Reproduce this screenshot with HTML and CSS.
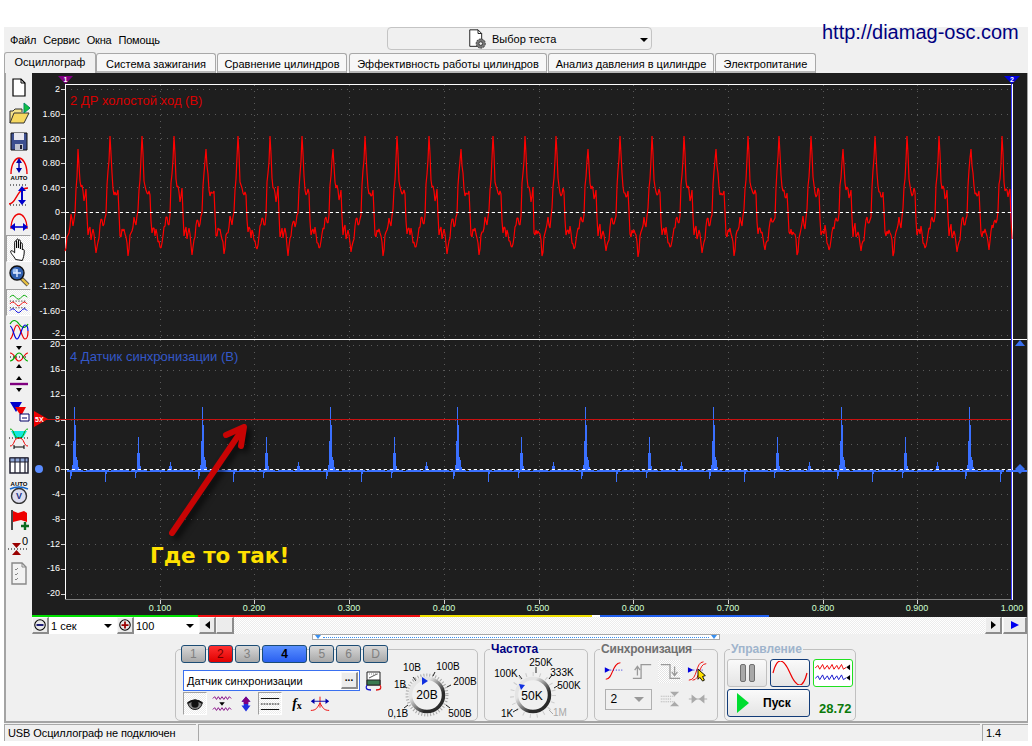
FILE: index.html
```html
<!DOCTYPE html>
<html lang="ru">
<head>
    <meta charset="UTF-8">
    <title>USB Осциллограф</title>
    <link rel="stylesheet" href="styles.css">
</head>
<body>
    <div class="window">
        <div class="topbar">
            <nav class="menu">
                <span>Файл</span>
                <span>Сервис</span>
                <span>Окна</span>
                <span>Помощь</span>
            </nav>
            <div class="test-select">
                <svg class="test-icon" viewBox="0 0 24 24">
                    <path d="M3 2h9l4 4v14H3z" fill="#fff" stroke="#111"/>
                    <path d="M12 2v4h4" fill="none" stroke="#111"/>
                    <circle cx="15" cy="17" r="5" fill="#777" stroke="#333" stroke-dasharray="2 1"/>
                    <circle cx="15" cy="17" r="2" fill="#eee" stroke="#333"/>
                </svg>
                <span>Выбор теста</span>
                <i class="caret"></i>
            </div>
            <a class="site-link">http://diamag-osc.com</a>
        </div>

        <div class="tabs">
            <span class="tab active">Осциллограф</span>
            <span class="tab w-ign">Система зажигания</span>
            <span class="tab w-cmp">Сравнение цилиндров</span>
            <span class="tab w-eff">Эффективность работы цилиндров</span>
            <span class="tab w-prs">Анализ давления в цилиндре</span>
            <span class="tab w-pwr">Электропитание</span>
        </div>

        <div class="frame">
            <div class="workspace">
                <aside class="sidebar">
                    <div class="side-btn"><svg viewBox="0 0 24 24"><path d="M6 4h8l4 4v13H6z" fill="#fff" stroke="#000" stroke-width="1.2"/><path d="M14 4v4h4" fill="none" stroke="#000"/></svg></div>
                    <div class="side-btn"><svg viewBox="0 0 24 24"><path d="M3 21V9h3l2-2h7v3" fill="#f3e28a" stroke="#333"/><path d="M3 21l4-10h15l-5 10z" fill="#f5d860" stroke="#333"/><path d="M17 1l6 5-6 5z" fill="#10c040" stroke="#086"/></svg></div>
                    <div class="side-btn"><svg viewBox="0 0 24 24"><path d="M4 4h16v17H4z" fill="#3c4f90" stroke="#111"/><path d="M7 4h10v7H7z" fill="#e8e8f0"/><path d="M8 15h8v6H8z" fill="#c0c4d0"/><path d="M13 16h2v4h-2z" fill="#223"/></svg></div>
                    <div class="side-btn"><svg viewBox="0 0 24 24"><path d="M4 18C4 7 9 2 12 2s8 5 8 16" fill="none" stroke="#e00" stroke-width="1.4"/><path d="M12 5v9" stroke="#00a" stroke-width="1.4"/><path d="M9 7l3-5 3 5zM9 12l3 5 3-5z" fill="#00a"/><text x="12" y="24" class="icon-text" text-anchor="middle">AUTO</text></svg></div>
                    <div class="side-btn"><svg viewBox="0 0 24 24"><path d="M2 21C10 21 9 5 21 5" fill="none" stroke="#e00" stroke-width="1.4"/><path d="M3 2h18M3 22h18" stroke="#000" stroke-dasharray="1 2"/><path d="M15 6v12" stroke="#00c" stroke-width="2"/><path d="M11 8l4-5 4 5zM11 17l4 5 4-5z" fill="#00c"/></svg></div>
                    <div class="side-btn"><svg viewBox="0 0 24 24"><path d="M4 19C4 8 9 4 12 4s8 4 8 15" fill="none" stroke="#e00" stroke-width="1.3"/><path d="M6 17h12" stroke="#00c" stroke-width="1.6"/><path d="M8 13l-5 4 5 4zM16 13l5 4-5 4z" fill="#00c"/></svg></div>
                    <div class="side-btn pressed"><svg viewBox="0 0 24 24"><path d="M9 23C7 19 3 16 4 14c1-1 3 1 4 2V5c0-2 2-2 2 0v6-8c0-2 2-2 2 0v8-7c0-2 2-2 2 0v8-5c0-2 2-2 2 0v6c0-1 2-1 2 1 0 5-1 7-2 10z" fill="#fff" stroke="#000"/></svg></div>
                    <div class="side-btn"><svg viewBox="0 0 24 24"><path d="M14 14l7 7" stroke="#555" stroke-width="4"/><path d="M15 15l6 6" stroke="#e8c040" stroke-width="2.4"/><circle cx="10" cy="9" r="7" fill="#3060b0" stroke="#111" stroke-width="1.4"/><circle cx="8" cy="7" r="2.5" fill="#a0c0f0"/><path d="M6 9h8M10 5v8" stroke="#dce8ff" stroke-width="1.4"/></svg></div>
                    <div class="side-btn pressed"><svg viewBox="0 0 24 24"><path d="M3 6q3-4 6 0t6 0 6 0" fill="none" stroke="#0a0"/><path d="M3 13q3-4 6 0t6 0 6 0" fill="none" stroke="#e00"/><path d="M3 20q3-4 6 0t6 0 6 0" fill="none" stroke="#00d"/><path d="M3 10h18M3 17h18" stroke="#000" stroke-dasharray="1 2"/></svg></div>
                    <div class="side-btn"><svg viewBox="0 0 24 24"><path d="M3 6q4-7 9 0t9 0" fill="none" stroke="#0a0" stroke-width="1.2"/><path d="M3 21C6 21 7 7 10 7s5 14 8 14 3-8 3-8" fill="none" stroke="#e00" stroke-width="1.2"/><path d="M3 8c3 0 4 13 7 13s5-14 8-14 3 6 3 6" fill="none" stroke="#00d" stroke-width="1.2"/></svg></div>
                    <div class="side-btn"><svg viewBox="0 0 24 24"><path d="M3 8c5 0 5 8 9 8s5-8 9-8" fill="none" stroke="#e00" stroke-width="1.2"/><path d="M3 16c5 0 5-8 9-8s5 8 9 8" fill="none" stroke="#0a0" stroke-width="1.2"/><path d="M3 12h18" stroke="#000" stroke-dasharray="1 2"/><path d="M9 1h6l-3 4zM9 23h6l-3-4z" fill="#000"/></svg></div>
                    <div class="side-btn"><svg viewBox="0 0 24 24"><path d="M3 12h18" stroke="#800080" stroke-width="2.4"/><path d="M9 8h6l-3-4zM9 16h6l-3 4z" fill="#000"/></svg></div>
                    <div class="side-btn"><svg viewBox="0 0 24 24"><path d="M3 3h12l-6 10z" fill="#00c"/><path d="M8 8h11l-5 9z" fill="#e00"/><path d="M13 15h9v7h-9z" fill="#fff" stroke="#006"/><path d="M15 19h5" stroke="#006"/></svg></div>
                    <div class="side-btn"><svg viewBox="0 0 24 24"><path d="M4 5h16l-4 7H8z" fill="#10e8e0"/><path d="M3 3c5 0 3 9 9 9s4-9 9-9" fill="none" stroke="#0a0"/><path d="M2 12h20" stroke="#000" stroke-dasharray="1 2"/><path d="M3 20c5 0 3-8 9-8s4 8 9 8" fill="none" stroke="#e00"/><path d="M7 21h10M7 19v4M17 19v4" stroke="#000"/></svg></div>
                    <div class="side-btn"><svg viewBox="0 0 24 24"><path d="M3 5h18v15H3z" fill="#fff" stroke="#223" stroke-width="1.5"/><path d="M3 5h18v4H3z" fill="#90a8d8" stroke="#223"/><path d="M8 5v15M13 5v15M18 5v15" stroke="#223" stroke-width="1.2"/></svg></div>
                    <div class="side-btn"><svg viewBox="0 0 24 24"><text x="12" y="6" class="icon-text" text-anchor="middle">AUTO</text><path d="M3 9q9-4 18 0" fill="none" stroke="#16c" stroke-width="1.4"/><circle cx="12" cy="16" r="7.5" fill="#dde" stroke="#333" stroke-width="1.4"/><text x="12" y="19" class="icon-v" text-anchor="middle">V</text></svg></div>
                    <div class="side-btn"><svg viewBox="0 0 24 24"><path d="M5 3v20" stroke="#000" stroke-width="1.4"/><path d="M6 4l5 2 6-2 3 2v9l-6-2-8 2z" fill="#e00"/><path d="M14 19h8M18 15v8" stroke="#0a6a20" stroke-width="2.4"/></svg></div>
                    <div class="side-btn"><svg viewBox="0 0 24 24"><path d="M5 9h9l-4.500 5zM5 21h9l-4.500-5z" fill="#900"/><path d="M1 15h20" stroke="#000" stroke-dasharray="1 2"/><text x="18" y="11" class="icon-num" text-anchor="middle">0</text></svg></div>
                    <div class="side-btn"><svg viewBox="0 0 24 24"><path d="M5 2h10l4 4v17H5z" fill="#f2f2f2" stroke="#888" stroke-width="1.4"/><path d="M15 2v4h4" fill="none" stroke="#888"/><path d="M8 8l1 1 2-2M8 13l1 1 2-2M8 18l1 1 2-2" fill="none" stroke="#888"/></svg></div>
                </aside>

                <div class="scope-col">
                    <svg class="scope" viewBox="32 73 995 542">
                        <g id="grid"></g>

                        <text x="70" y="105" class="trace-title ch2-title">2 ДР холостой ход (В)</text>
                        <text x="70" y="361" class="trace-title ch4-title">4 Датчик синхронизации (В)</text>

                        <g class="axis-labels">
                            <text x="60" y="92">2</text>
                            <text x="60" y="117">1.60</text>
                            <text x="60" y="142">1.20</text>
                            <text x="60" y="166">0.80</text>
                            <text x="60" y="191">0.40</text>
                            <text x="60" y="215">0</text>
                            <text x="60" y="240">-0.40</text>
                            <text x="60" y="265">-0.80</text>
                            <text x="60" y="289">-1.20</text>
                            <text x="60" y="314">-1.60</text>
                            <text x="60" y="336">-2</text>
                            <text x="60" y="347">20</text>
                            <text x="60" y="372">16</text>
                            <text x="60" y="397">12</text>
                            <text x="60" y="422">8</text>
                            <text x="60" y="447">4</text>
                            <text x="60" y="472">0</text>
                            <text x="60" y="497">-4</text>
                            <text x="60" y="522">-8</text>
                            <text x="60" y="547">-12</text>
                            <text x="60" y="571">-16</text>
                            <text x="60" y="596">-20</text>
                        </g>
                        <g class="time-labels">
                            <text x="160" y="611">0.100</text>
                            <text x="254" y="611">0.200</text>
                            <text x="349" y="611">0.300</text>
                            <text x="444" y="611">0.400</text>
                            <text x="538" y="611">0.500</text>
                            <text x="633" y="611">0.600</text>
                            <text x="728" y="611">0.700</text>
                            <text x="823" y="611">0.800</text>
                            <text x="917" y="611">0.900</text>
                            <text x="1012" y="611">1.000</text>
                        </g>

                        <polyline id="ch2" class="trace trace-red"></polyline>
                        <path id="ch4-base" class="trace-base"></path>
                        <polyline id="ch4" class="trace trace-blue"></polyline>
                        <path d="M66 212H1011M66 469H1011" class="zero-line"/>
                        <path d="M46 419H1011" class="trig-line"/>

                        <path d="M58 76h15l-7.500 8z" fill="#800080"/>
                        <text x="65.500" y="82" class="marker-num">1</text>
                        <path d="M1004 76h16l-8 8z" fill="#0000e0"/>
                        <text x="1012" y="82" class="marker-num">2</text>
                        <path d="M34 411l14 8-14 8z" fill="#ee0000"/>
                        <text x="35" y="422" class="marker-5x">5X</text>
                        <circle cx="39" cy="469" r="4" fill="#5a8cff"/>
                        <path d="M1020 340l5 6h-10z" fill="#3a70f0"/>
                        <path d="M1020 464l5 5-5 5-5-5z" fill="#3a70f0"/>

                        <g class="arrow">
                            <path d="M172 533L242 430" class="arrow-line"/>
                            <path d="M226 435L244 427L241 446" class="arrow-line"/>
                        </g>
                        <text x="150" y="563" class="note">Где то так!</text>
                    </svg>

                    <div class="color-bar">
                        <i class="seg-green"></i><i class="seg-red"></i><i class="seg-yellow"></i><i class="seg-gap"></i><i class="seg-blue"></i><i class="seg-dark"></i>
                    </div>

                    <div class="time-bar">
                        <div class="bevel round-btn"><svg viewBox="0 0 16 16"><circle cx="8" cy="8" r="6" fill="#e8e8e8" stroke="#000" stroke-width="1.2"/><path d="M4 8h8" stroke="#006" stroke-width="2"/></svg></div>
                        <div class="combo combo-time"><span>1 сек</span><i class="caret"></i></div>
                        <div class="bevel round-btn"><svg viewBox="0 0 16 16"><circle cx="8" cy="8" r="6" fill="#e8e8e8" stroke="#000" stroke-width="1.2"/><path d="M4 8h8M8 4v8" stroke="#900" stroke-width="2"/></svg></div>
                        <div class="combo combo-count"><span>100</span><i class="caret"></i></div>
                        <div class="bevel scroll-btn"><i class="tri-left"></i></div>
                        <div class="bevel scroll-thumb"></div>
                        <div class="scroll-track"></div>
                        <div class="bevel scroll-btn"><i class="tri-right"></i></div>
                        <div class="bevel play-btn"><i class="tri-blue"></i></div>
                    </div>
                </div>
            </div>

            <div class="collapse-row">
                <div class="collapse-handle"><i class="tri-down"></i><span class="dots"></span><i class="tri-down"></i></div>
            </div>

            <div class="panel">
                <section class="group group-channel">
                    <div class="channel-col">
                        <div class="channels">
                            <button class="ch">1</button>
                            <button class="ch ch-red">2</button>
                            <button class="ch">3</button>
                            <button class="ch ch-blue">4</button>
                            <button class="ch">5</button>
                            <button class="ch">6</button>
                            <button class="ch">D</button>
                        </div>
                        <div class="sensor-row">
                            <div class="sensor-input">
                                <span>Датчик синхронизации</span>
                                <b class="bevel more-btn">...</b>
                            </div>
                            <svg class="meter-icon" viewBox="0 0 20 20">
                                <path d="M4 1h13v13H4z" fill="#fff" stroke="#222"/>
                                <path d="M6 7l8-4" stroke="#555"/>
                                <path d="M6 3h9" stroke="#888" stroke-dasharray="1 1"/>
                                <path d="M4 9h13v5H4z" fill="#3a7a50" stroke="#222"/>
                                <path d="M4 14q-3 5 4 5" fill="none" stroke="#11c" stroke-width="1.3"/>
                                <path d="M17 14q3 5-4 5" fill="none" stroke="#d11" stroke-width="1.3"/>
                            </svg>
                        </div>
                        <div class="tools">
                            <div class="tool pressed"><svg viewBox="0 0 24 22"><path d="M4 10q8-7 16 0-2 7-8 7t-8-7z" fill="#888" stroke="#111"/><circle cx="12" cy="11" r="4" fill="#111"/><path d="M4 10q8-6 16 0" fill="none" stroke="#111" stroke-width="2"/></svg></div>
                            <div class="tool"><svg viewBox="0 0 24 22"><path d="M2 5l2-2 2 3 2-3 2 3 2-3 2 3 2-3 2 3 2-3 2 2" fill="none" stroke="#800080"/><path d="M9 9h6l-3 4z" fill="#000"/><path d="M2 17l2-2 2 3 2-3 2 3 2-3 2 3 2-3 2 3 2-3 2 2" fill="none" stroke="#800080"/></svg></div>
                            <div class="tool tool-narrow"><svg viewBox="0 0 24 22"><path d="M12 1l6 7h-3v5h3l-6 8-6-8h3V8H6z" fill="#2030e0"/><path d="M12 1l6 7h-3v3H9V8H6z" fill="#800080"/></svg></div>
                            <div class="tool pressed"><svg viewBox="0 0 24 22"><path d="M2 5h20M2 17h20" stroke="#000"/><path d="M2 11h20" stroke="#000" stroke-dasharray="2 1"/></svg></div>
                            <div class="tool tool-fx"><i>f</i><small>x</small></div>
                            <div class="tool tool-split"><svg viewBox="0 0 24 22"><path d="M12 3v12M2 18c6 0 7-3 10-8 3 5 4 8 10 8" fill="none" stroke="#e00"/><path d="M3 8h18" stroke="#00a"/><path d="M2 8l4-3v6zM22 8l-4-3v6z" fill="#00a"/></svg></div>
                        </div>
                    </div>
                    <svg class="knob knob-volt" viewBox="388 650 89 70">
                        <defs>
                            <linearGradient id="ring" x1="0" y1="0" x2="1" y2="1">
                                <stop offset="0.300" stop-color="#e4e4e4"/>
                                <stop offset="0.700" stop-color="#2a2a2a"/>
                            </linearGradient>
                        </defs>
                        <circle cx="427" cy="695" r="20" class="knob-scale"/>
                        <path d="M416 681l-3-4M433 676l2-4M447 687l4-2M446 705l4 3M408 705l-4 3M407 688l-4-2" class="knob-tick"/>
                        <circle cx="427" cy="695" r="16.500" class="knob-ring"/>
                        <path d="M422 677l6 4-6 4z" fill="#1030e0"/>
                        <text x="427" y="699" class="knob-value">20В</text>
                        <text x="412" y="671">10В</text>
                        <text x="448" y="670">100В</text>
                        <text x="400" y="688">1В</text>
                        <text x="465" y="685">200В</text>
                        <text x="398" y="717">0,1В</text>
                        <text x="460" y="717">500В</text>
                    </svg>
                </section>

                <section class="group group-freq">
                    <h3 class="group-title title-navy">Частота</h3>
                    <svg class="knob knob-freq" viewBox="485 656 102 64">
                        <circle cx="533" cy="695" r="21" class="knob-scale knob-scale-soft"/>
                        <path d="M522 679l-3-4M536 673v-6M549 679l3-4M554 688l5-3M518 709l-5 3" class="knob-tick"/>
                        <path d="M549 710l4 4" class="knob-tick-off"/>
                        <circle cx="533" cy="695" r="16.500" class="knob-ring"/>
                        <path d="M519 684l6 1-4 5z" fill="#1030e0"/>
                        <text x="532" y="700" class="knob-value">50K</text>
                        <text x="506" y="677">100K</text>
                        <text x="541" y="666">250K</text>
                        <text x="562" y="676">333K</text>
                        <text x="569" y="689">500K</text>
                        <text x="507" y="717">1K</text>
                        <text x="560" y="716" class="label-off">1M</text>
                    </svg>
                </section>

                <section class="group group-sync">
                    <h3 class="group-title title-grey">Синхронизация</h3>
                    <div class="sync-grid">
                        <div class="tool"><svg viewBox="0 0 24 24"><path d="M3 21C11 21 10 3 19 3" fill="none" stroke="#e00" stroke-width="1.2"/><path d="M2 8l6 3-6 3z" fill="#00d"/><path d="M8 11h13" stroke="#00d" stroke-dasharray="1 2"/></svg></div>
                        <div class="tool"><svg viewBox="0 0 24 24"><path d="M2 20h9V5h11" fill="none" stroke="#999" stroke-width="1.4"/><path d="M7 17V8M4 11l3-4 3 4" fill="none" stroke="#999" stroke-width="1.4"/></svg></div>
                        <div class="tool dither"><svg viewBox="0 0 24 24"><path d="M2 5h10v15h11" fill="none" stroke="#999" stroke-width="1.4"/><path d="M17 7v9M14 13l3 4 3-4" fill="none" stroke="#999" stroke-width="1.4"/></svg></div>
                        <div class="tool"><svg viewBox="0 0 24 24"><path d="M2 22C12 22 9 2 18 2M6 22C15 22 12 4 21 4" fill="none" stroke="#e00"/><path d="M1 8l6 3-6 3z" fill="#00d"/><path d="M7 11h11" stroke="#00d" stroke-dasharray="1 2"/><path d="M12 10l8 7-3 1 2 4-2 1-3-4-2 2z" fill="#ffe000" stroke="#000"/></svg></div>
                        <div class="mini-combo"><span>2</span><i class="caret caret-off"></i></div>
                        <div class="tool"><svg viewBox="0 0 24 24"><path d="M2 9h15M2 12h12M2 15h15" stroke="#aaa" stroke-dasharray="1 1"/><path d="M12 4h10l-5 5zM12 20h10l-5-5z" fill="#aaa"/></svg></div>
                        <div class="tool"><svg viewBox="0 0 24 24"><path d="M2 12h20" stroke="#aaa"/><path d="M5 7l6 5-6 5zM19 7l-6 5 6 5z" fill="#aaa"/></svg></div>
                    </div>
                </section>

                <section class="group group-run">
                    <h3 class="group-title title-blue">Управление</h3>
                    <div class="run-grid">
                        <button class="run-btn btn-pause"><i></i><i></i></button>
                        <button class="run-btn btn-sine"><svg viewBox="0 0 36 24"><path d="M1 12C5 -4 11 -4 18 12S31 28 35 12" fill="none" stroke="#e00" stroke-width="1.2"/></svg></button>
                        <button class="run-btn btn-waves"><svg viewBox="0 0 38 24"><path d="M0 7l3-3 2 4 3-5 2 5 3-4 2 4 3-5 2 5 3-4 2 4 3-5 2 5 3-2" fill="none" stroke="#e00"/><path d="M0 18l3-3 2 4 3-5 2 5 3-4 2 4 3-5 2 5 3-4 2 4 3-5 2 5 3-2" fill="none" stroke="#11c"/><path d="M37 3l-4 3 4 3zM37 14l-4 3 4 3z" fill="#000"/></svg></button>
                        <button class="run-btn btn-start"><i class="tri-green"></i><b>Пуск</b></button>
                        <span class="fps">28.72</span>
                    </div>
                </section>
            </div>
        </div>

        <footer class="statusbar">
            <span class="status-cell status-main">USB Осциллограф не подключен</span>
            <span class="status-cell status-fill"></span>
            <span class="status-cell status-ver">1.4</span>
        </footer>
    </div>

    <script src="app.js"></script>
</body>
</html>
```

FILE: styles.css
```css
* {
    box-sizing: border-box;
}

body {
    margin: 0;
    background-color: #ffffff;
    font-family: "Liberation Sans", Arial, sans-serif;
    font-size: 11px;
    color: #000000;
    overflow: hidden;
}

.window {
    width: 1024px;
    height: 714px;
    margin: 27px 0 0 4px;
    background-color: #f0f0f0;
    display: flex;
    flex-direction: column;
}

/* menu line */
.topbar {
    height: 25px;
    display: flex;
    align-items: flex-start;
    flex-shrink: 0;
}

.menu {
    width: 383px;
    padding: 7px 0 0 6px;
    display: flex;
    gap: 7px;
    font-size: 11px;
    letter-spacing: -0.2px;
}

.test-select {
    width: 265px;
    height: 23px;
    display: flex;
    align-items: center;
    padding-left: 79px;
    border: 1px solid #c4c4c4;
    border-radius: 4px;
    position: relative;
}

.test-icon {
    width: 22px;
    height: 22px;
    margin-right: 3px;
}

.test-select .caret {
    position: absolute;
    right: 3px;
    top: 10px;
}

.site-link {
    margin: -6px 0 0 170px;
    font-size: 20px;
    color: #000080;
    white-space: nowrap;
}

.caret {
    display: inline-block;
    width: 0;
    height: 0;
    border-left: 4px solid transparent;
    border-right: 4px solid transparent;
    border-top: 4px solid #000000;
}

.caret-off {
    border-left-width: 5px;
    border-right-width: 5px;
    border-top: 5px solid #999999;
}

/* tabs */
.tabs {
    height: 21px;
    display: flex;
    align-items: flex-end;
    flex-shrink: 0;
}

.tab {
    height: 20px;
    margin-right: 1px;
    border: 1px solid #a8a8a8;
    border-bottom: none;
    border-radius: 3px 3px 0 0;
    background-color: #f7f7f7;
    box-shadow: inset 0 -2px 0 #b8b8b8;
    display: flex;
    align-items: center;
    justify-content: center;
    white-space: nowrap;
}

.tab.active {
    height: 21px;
    width: 92px;
    margin-right: 0;
    background-color: #f0f0f0;
    box-shadow: none;
    padding-bottom: 3px;
}

.w-ign { width: 120px; }
.w-cmp { width: 130px; margin-right: 2px; }
.w-eff { width: 198px; }
.w-prs { width: 166px; }
.w-pwr { width: 101px; }

/* main area */
.frame {
    height: 650px;
    border-left: 2px solid #a4a4a4;
    border-right: 1px solid #a4a4a4;
    border-bottom: 2px solid #a4a4a4;
    flex-shrink: 0;
}

.workspace {
    display: flex;
    height: 561px;
}

.sidebar {
    width: 26px;
    flex-shrink: 0;
    display: flex;
    flex-direction: column;
}

.side-btn {
    width: 25px;
    height: 27px;
    display: flex;
    align-items: center;
    justify-content: center;
}

.side-btn svg {
    width: 24px;
    height: 24px;
}

.pressed {
    border-top: 1px solid #a0a0a0;
    border-left: 1px solid #a0a0a0;
    border-right: 1px solid #ffffff;
    border-bottom: 1px solid #ffffff;
    background: repeating-conic-gradient(#ffffff 0 25%, #ececec 0 50%) 0 0 / 2px 2px;
}

.icon-text {
    font-size: 6px;
    font-weight: bold;
    font-family: "Liberation Sans", Arial, sans-serif;
}

.icon-v {
    font-size: 9px;
    font-weight: bold;
    fill: #223388;
    font-family: "Liberation Sans", Arial, sans-serif;
}

.icon-num {
    font-size: 11px;
    font-family: "Liberation Sans", Arial, sans-serif;
}

.scope-col {
    width: 995px;
    flex-shrink: 0;
}

/* the scope picture */
.scope {
    display: block;
    width: 995px;
    height: 542px;
    background-color: #1e1e1e;
    font-family: "Liberation Sans", Arial, sans-serif;
}

.grid-dots {
    stroke: #5a5a5a;
    stroke-dasharray: 1 5;
    shape-rendering: crispEdges;
}

.axis-line {
    stroke: #ffffff;
    shape-rendering: crispEdges;
}

.axis-line-blue {
    stroke: #3a3aff;
    shape-rendering: crispEdges;
}

.axis-tick {
    stroke: #d0d0d0;
    shape-rendering: crispEdges;
}

.axis-bottom {
    stroke: #808080;
    shape-rendering: crispEdges;
}

.axis-labels text {
    font-size: 9px;
    fill: #ffffff;
    text-anchor: end;
}

.time-labels text {
    font-size: 9px;
    fill: #d0ffd0;
    text-anchor: middle;
}

.trace-title {
    font-size: 13px;
}

.ch2-title {
    fill: #d80000;
}

.ch4-title {
    fill: #3458c8;
}

.trace {
    fill: none;
    stroke-width: 1;
}

.trace-red {
    stroke: #ff0000;
    stroke-width: 1.2;
    stroke-linejoin: bevel;
}

.trace-blue {
    stroke: #3a70ff;
    shape-rendering: crispEdges;
}

.trace-base {
    fill: none;
    stroke: #3a70ff;
    stroke-width: 2;
    shape-rendering: crispEdges;
}

.zero-line {
    stroke: #ffffff;
    stroke-dasharray: 3 3;
    shape-rendering: crispEdges;
}

.trig-line {
    stroke: #c81010;
    shape-rendering: crispEdges;
}

.marker-num {
    font-size: 7px;
    font-weight: bold;
    fill: #ffffff;
    text-anchor: middle;
}

.marker-5x {
    font-size: 7px;
    font-weight: bold;
    fill: #ffffff;
}

.arrow {
    filter: drop-shadow(4px 4px 3px rgba(0, 0, 0, 0.7));
}

.arrow-line {
    fill: none;
    stroke: #c80404;
    stroke-width: 6;
    stroke-linecap: round;
    stroke-linejoin: round;
}

.note {
    font-family: "DejaVu Sans", sans-serif;
    font-size: 21.500px;
    font-weight: bold;
    fill: #ffe000;
}

/* coloured strip under the scope */
.color-bar {
    height: 2px;
    display: flex;
}

.color-bar i {
    display: block;
    height: 2px;
}

.seg-green { width: 166px; background-color: #00e000; }
.seg-red { width: 222px; background-color: #f01010; }
.seg-yellow { width: 172px; background-color: #f0e000; }
.seg-gap { width: 8px; background-color: #ffffff; }
.seg-blue { width: 169px; background-color: #2060f0; }
.seg-dark { flex: 1; background-color: #202020; }

.time-bar {
    height: 17px;
    display: flex;
    background-color: #ffffff;
}

.bevel {
    background-color: #ececec;
    border-top: 1px solid #f8f8f8;
    border-left: 1px solid #f8f8f8;
    border-right: 2px solid #8c8c8c;
    border-bottom: 2px solid #8c8c8c;
}

.round-btn {
    width: 17px;
    display: flex;
    align-items: center;
    justify-content: center;
}

.round-btn svg {
    width: 14px;
    height: 14px;
}

.combo {
    display: flex;
    align-items: center;
    justify-content: space-between;
    padding: 0 5px 0 2px;
    font-size: 11px;
}

.combo-time { width: 68px; }
.combo-count { width: 65px; }

.scroll-btn {
    width: 17px;
    display: flex;
    align-items: center;
    justify-content: center;
}

.scroll-thumb {
    width: 18px;
}

.scroll-track {
    flex: 1;
    background: repeating-conic-gradient(#ffffff 0 25%, #ececec 0 50%) 0 0 / 2px 2px;
}

.play-btn {
    width: 24px;
    margin-left: 1px;
    display: flex;
    align-items: center;
    justify-content: center;
}

.tri-left {
    border-top: 4px solid transparent;
    border-bottom: 4px solid transparent;
    border-right: 5px solid #000000;
}

.tri-right {
    border-top: 4px solid transparent;
    border-bottom: 4px solid transparent;
    border-left: 5px solid #000000;
}

.tri-blue {
    border-top: 4px solid transparent;
    border-bottom: 4px solid transparent;
    border-left: 8px solid #0000f0;
}

/* thin collapse handle */
.collapse-row {
    height: 6px;
    padding-left: 306px;
}

.collapse-handle {
    width: 408px;
    height: 6px;
    border: 1px solid #a8a8a8;
    background-color: #ffffff;
    display: flex;
    align-items: center;
    justify-content: space-between;
    padding: 0 2px;
}

.tri-down {
    border-left: 3px solid transparent;
    border-right: 3px solid transparent;
    border-top: 4px solid #3a90f0;
}

.dots {
    flex: 1;
    height: 1px;
    margin: 0 2px;
    border-top: 1px dotted #3a90f0;
}

/* bottom panel */
.panel {
    margin-top: 9px;
    padding-left: 169px;
    display: flex;
    gap: 6px;
}

.group {
    height: 72px;
    border: 1px solid #c0c0c0;
    border-radius: 5px;
    flex-shrink: 0;
}

.group-channel {
    width: 303px;
    display: flex;
}

.group-freq { width: 104px; }
.group-sync { width: 124px; }
.group-run { width: 132px; }

.group-title {
    display: table;
    height: 14px;
    margin: -8px 0 0 5px;
    padding: 0 1px;
    background-color: #f0f0f0;
    font-size: 12px;
    font-weight: bold;
    line-height: 14px;
}

.title-navy { color: #000080; }
.title-grey { color: #707070; letter-spacing: -0.2px; }
.title-blue { color: #9fb4cc; }

.channel-col {
    width: 212px;
    flex-shrink: 0;
}

.channels {
    display: flex;
    gap: 2px;
    margin: -5px 0 0 5px;
}

.ch {
    width: 25px;
    height: 18px;
    padding: 0;
    border: 1px solid #1c4c74;
    border-radius: 3px;
    background: linear-gradient(#d8d8d8, #a8a8a8);
    color: #808080;
    font-family: "Liberation Sans", Arial, sans-serif;
    font-size: 12px;
    line-height: 14px;
}

.ch-red {
    background: linear-gradient(#ff3030, #e00000);
    color: #700000;
}

.ch-blue {
    width: 46px;
    background: linear-gradient(#5a90ff, #2a60f0);
    color: #000000;
    font-weight: bold;
}

.sensor-row {
    display: flex;
    align-items: center;
    margin: 7px 0 0 7px;
    gap: 3px;
}

.sensor-input {
    width: 177px;
    height: 21px;
    border: 1px solid #3a70f0;
    background-color: #ffffff;
    display: flex;
    align-items: center;
    justify-content: space-between;
    padding: 0 1px 0 3px;
    font-size: 11px;
}

.more-btn {
    width: 17px;
    height: 17px;
    text-align: center;
    font-size: 10px;
    line-height: 9px;
}

.meter-icon {
    width: 20px;
    height: 20px;
}

.tools {
    display: flex;
    align-items: center;
    margin: 1px 0 0 7px;
    gap: 3px;
}

.tool {
    width: 24px;
    height: 23px;
    display: flex;
    align-items: center;
    justify-content: center;
}

.tool svg {
    width: 22px;
    height: 22px;
}

.tool-narrow {
    width: 18px;
}

.tool-narrow svg {
    width: 18px;
}

.tool-split {
    margin-left: -4px;
}

.tool-fx {
    font-family: "Liberation Serif", serif;
    font-weight: bold;
    font-size: 14px;
}

.tool-fx small {
    font-size: 10px;
    margin-top: 3px;
}

.dither {
    background: repeating-conic-gradient(#ffffff 0 25%, #e4e4e4 0 50%) 0 0 / 2px 2px;
}

.knob {
    display: block;
    font-family: "Liberation Sans", Arial, sans-serif;
}

.knob text {
    font-size: 10px;
    text-anchor: middle;
}

.knob .knob-value {
    font-size: 12px;
}

.knob .label-off {
    fill: #a8a8a8;
}

.knob-volt {
    width: 89px;
    height: 70px;
}

.knob-freq {
    width: 102px;
    height: 64px;
}

.knob-scale {
    fill: none;
    stroke: #a8a8a8;
    stroke-width: 3;
    stroke-dasharray: 1 2;
}

.knob-scale-soft {
    stroke: #cccccc;
    stroke-dasharray: 1 6;
    stroke-width: 4;
}

.knob-tick {
    fill: none;
    stroke: #222222;
}

.knob-tick-off {
    stroke: #aaaaaa;
}

.knob-ring {
    fill: #f0f0f0;
    stroke: url(#ring);
    stroke-width: 3.500;
}

.sync-grid {
    display: grid;
    grid-template-columns: repeat(4, 28px);
    grid-auto-rows: 24px;
    gap: 4px 0;
    align-items: center;
    justify-items: center;
    padding: 3px 0 0 5px;
}

.mini-combo {
    grid-column: span 2;
    width: 47px;
    height: 21px;
    border: 1px solid #b0b0b0;
    background-color: #f0f0f0;
    display: flex;
    align-items: center;
    justify-content: space-between;
    padding: 0 7px 0 5px;
    font-size: 12px;
}

.run-grid {
    display: grid;
    grid-template-columns: repeat(3, 40px);
    grid-auto-rows: 28px;
    gap: 2px 3px;
    padding: 3px 0 0 2px;
}

.run-btn {
    padding: 0;
    border-radius: 3px;
    background: linear-gradient(#fafafa, #e4e4e4);
    display: flex;
    align-items: center;
    justify-content: center;
}

.btn-pause {
    border: 1px solid #c0c0c0;
    gap: 3px;
}

.btn-pause i {
    width: 6px;
    height: 18px;
    border: 1px solid #707070;
    border-radius: 2px;
    background-color: #a8a8a8;
}

.btn-sine {
    border: 1px solid #123c78;
}

.btn-waves {
    border: 1px solid #20e020;
    background: #ffffff;
}

.run-btn svg {
    width: 36px;
    height: 24px;
}

.btn-start {
    grid-column: span 2;
    border: 1px solid #123c78;
    justify-content: flex-start;
    padding-left: 9px;
    font-family: "Liberation Sans", Arial, sans-serif;
    font-size: 12px;
}

.btn-start b {
    margin-left: 14px;
}

.tri-green {
    border-top: 10px solid transparent;
    border-bottom: 10px solid transparent;
    border-left: 12px solid #00dd30;
}

.fps {
    align-self: end;
    padding: 0 0 1px 6px;
    white-space: nowrap;
    font-size: 13px;
    font-weight: bold;
    color: #0a7a0a;
}

/* status line */
.statusbar {
    height: 17px;
    margin-top: 1px;
    display: flex;
    gap: 2px;
    flex-shrink: 0;
}

.status-cell {
    border-top: 1px solid #a8a8a8;
    border-left: 1px solid #a8a8a8;
    padding: 2px 0 0 3px;
    letter-spacing: -0.1px;
}

.status-main { width: 192px; }
.status-fill { flex: 1; }
.status-ver { width: 46px; }
```

FILE: app.js
```js
const SVG_NS = 'http://www.w3.org/2000/svg';
const PLOT_LEFT = 65;
const PLOT_RIGHT = 1012;

// one 32px cycle of channel 2, starting from the peak (volts)
const CYCLE = [
    1.23, 0.95, 0.55, 0.4, 0.35, 0.32, 0.25, 0.3, 0.34, -0.07, -0.37, -0.32, -0.26, -0.38, -0.3, -0.33,
    -0.42, -0.5, -0.65, -0.58, -0.45, -0.38, -0.26, -0.2, -0.1, -0.16, -0.2, -0.12, -0.02, 0.42, 0.6, 0.85
];

function addLine(parent, cls, x1, y1, x2, y2) {
    const line = document.createElementNS(SVG_NS, 'line');
    line.setAttribute('class', cls);
    line.setAttribute('x1', x1);
    line.setAttribute('y1', y1);
    line.setAttribute('x2', x2);
    line.setAttribute('y2', y2);
    parent.appendChild(line);
}

function drawGrid() {
    const grid = document.getElementById('grid');

    for (let i = 1; i < 10; i++) {
        const x = Math.round(PLOT_LEFT + i * 94.7);
        addLine(grid, 'grid-dots', x, 85, x, 339);
        addLine(grid, 'grid-dots', x, 340, x, 599);
        addLine(grid, 'axis-tick', x, 600, x, 604);
    }

    for (let i = 0; i <= 10; i++) {
        const y1 = Math.round(89 + i * 24.6);
        const y2 = Math.round(345 + i * 24.85);
        addLine(grid, 'grid-dots', PLOT_LEFT, y1, PLOT_RIGHT, y1);
        addLine(grid, 'axis-tick', 61, y1, PLOT_LEFT, y1);
        addLine(grid, 'grid-dots', PLOT_LEFT, y2, PLOT_RIGHT, y2);
        addLine(grid, 'axis-tick', 61, y2, PLOT_LEFT, y2);
    }

    addLine(grid, 'axis-line', 65, 84, PLOT_RIGHT, 84);
    addLine(grid, 'axis-line', 32, 339.5, 1027, 339.5);
    addLine(grid, 'axis-line', 65, 84, 65, 600);
    addLine(grid, 'axis-bottom', 65, 599.5, PLOT_RIGHT, 599.5);
    addLine(grid, 'axis-line-blue', 1011, 84, 1011, 600);
    addLine(grid, 'axis-line', 1012, 84, 1012, 600);
}

function drawChannel2() {
    const period = 31.86;
    const points = [];
    for (let x = PLOT_LEFT; x <= PLOT_RIGHT; x++) {
        const pos = x - 78 + period * 10;
        const turn = Math.floor(pos / period);
        const index = Math.floor((pos - turn * period) / period * 32);
        let volts = CYCLE[index];
        // every few cycles the peak comes out lower
        if (index < 2 && turn % 4 === 2) {
            volts -= 0.2;
        }
        // only the lower part of the cycle is noisy
        if (index >= 2) {
            volts += 0.05 * Math.sin(x * 1.7) + 0.04 * Math.sin(turn * 2.3 + index);
        }
        points.push(x + ',' + Math.round(212 - volts * 61.5));
    }
    document.getElementById('ch2').setAttribute('points', points.join(' '));
}

// spikes of channel 4, as [px after the cycle start, volts]
const SPIKES = [
    [-3, -1.6], [-2, -1.2], [-1, 0.6], [0, 4.5], [1, 10], [2, 7], [3, 2], [4, 1.4], [5, 0.4],
    [32, -2.1], [33, -0.8], [34, -0.5],
    [62, -1.5], [63, -0.6], [64, 2.5], [65, 5.2], [66, 2.6], [67, 0.5],
    [96, 0.5], [97, 1.1], [98, 0.5]
];

// stretches of each cycle where the baseline breaks off
const BASE_GAPS = [[10, 13], [36, 38], [56, 58], [74, 77], [92, 94], [120, 122]];

function drawChannel4() {
    const period = 127.8;
    const levels = new Map();
    let base = '';

    for (let k = -1; k < 8; k++) {
        const start = Math.round(73 + k * period);
        SPIKES.forEach(([offset, volts]) => levels.set(start + offset, volts));

        let from = start;
        BASE_GAPS.forEach(([gapStart, gapEnd]) => {
            base += 'M' + Math.max(from, PLOT_LEFT) + ' 471H' + Math.max(start + gapStart, PLOT_LEFT);
            from = start + gapEnd;
        });
        base += 'M' + Math.max(from, PLOT_LEFT) + ' 471H' + Math.min(start + 127, PLOT_RIGHT - 1);
    }

    const points = [];
    for (let x = PLOT_LEFT; x <= PLOT_RIGHT; x++) {
        if (levels.has(x)) {
            const y = Math.round(469 - levels.get(x) * 6.22);
            points.push(x + ',471', x + ',' + y, x + ',471');
        }
    }
    document.getElementById('ch4').setAttribute('points', points.join(' '));
    document.getElementById('ch4-base').setAttribute('d', base);
}

drawGrid();
drawChannel2();
drawChannel4();
```
